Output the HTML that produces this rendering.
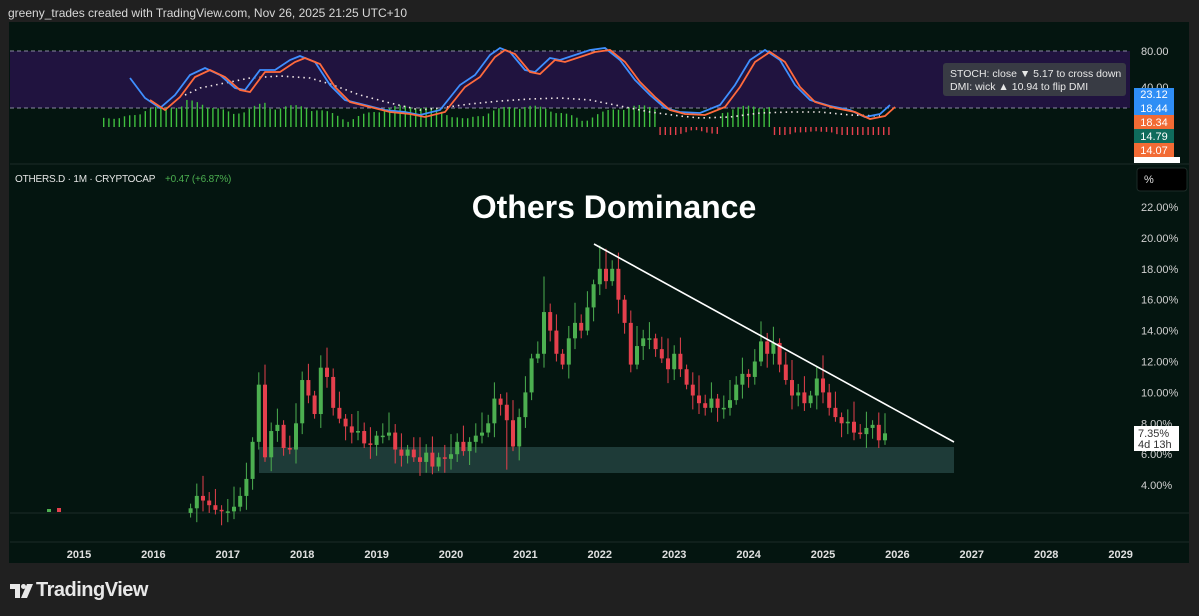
<!DOCTYPE html>
<html><head><meta charset="utf-8">
<style>
html,body{margin:0;padding:0;background:#202020;width:1199px;height:616px;overflow:hidden;font-family:"Liberation Sans",sans-serif}
.hdr{position:absolute;left:8px;top:6px;font-size:12px;color:#d8d8d8}
.panel{position:absolute;left:9px;top:22px;width:1180px;height:541px;background:#041510}
svg{position:absolute;left:0;top:0}
.logo{position:absolute;left:10px;top:579px;color:#e8e8e8;font-size:20px;font-weight:bold;letter-spacing:-0.5px}
</style></head><body>
<div class="hdr">greeny_trades created with TradingView.com, Nov 26, 2025 21:25 UTC+10</div>
<div class="panel"></div>
<svg id="s" width="1199" height="616" xmlns="http://www.w3.org/2000/svg" font-family="Liberation Sans, sans-serif">
<rect x="1130" y="22" width="59" height="541" fill="#041510"/>
<rect x="10" y="51" width="1120" height="57" fill="#20133f"/>
<line x1="10" y1="51" x2="1130" y2="51" stroke="#8a8aa0" stroke-dasharray="4,3"/>
<line x1="10" y1="108" x2="1130" y2="108" stroke="#8a8aa0" stroke-dasharray="4,3"/>
<line x1="10" y1="164" x2="1189" y2="164" stroke="#1c2b27"/>
<line x1="10" y1="513" x2="1189" y2="513" stroke="#1c2b27"/>
<line x1="10" y1="542" x2="1189" y2="542" stroke="#1c2b27"/>
<g id="hist"></g>
<polyline id="dots" fill="none" stroke="#f0e6e6" stroke-width="1.6" stroke-dasharray="1.5,4"/>
<polyline id="blue" fill="none" stroke="#3f8fff" stroke-width="1.8"/>
<polyline id="orng" fill="none" stroke="#ff6a3d" stroke-width="1.8"/>
<text x="1141" y="55" fill="#d8d8d8" font-size="11">80.00</text>
<rect x="943" y="63" width="183" height="33" rx="3" fill="#3a3d44" opacity="0.95"/>
<text x="950" y="77" fill="#e8e8e8" font-size="10.5">STOCH: close ▼ 5.17 to cross down</text>
<text x="950" y="90" fill="#e8e8e8" font-size="10.5">DMI: wick ▲ 10.94 to flip DMI</text>
<text x="1141" y="91" fill="#d8d8d8" font-size="11">40.00</text>
<rect x="1134" y="88" width="40" height="13" fill="#2f8ef5"/><text x="1154" y="98" fill="#fff" font-size="11" text-anchor="middle">23.12</text>
<rect x="1134" y="101" width="40" height="14" fill="#2f8ef5"/><text x="1154" y="112" fill="#fff" font-size="11" text-anchor="middle">18.44</text>
<rect x="1134" y="115" width="40" height="14" fill="#f26b34"/><text x="1154" y="126" fill="#fff" font-size="11" text-anchor="middle">18.34</text>
<rect x="1134" y="129" width="40" height="14" fill="#0f6b5c"/><text x="1154" y="140" fill="#fff" font-size="11" text-anchor="middle">14.79</text>
<rect x="1134" y="143" width="40" height="14" fill="#f26b34"/><text x="1154" y="154" fill="#fff" font-size="11" text-anchor="middle">14.07</text>
<rect x="1134" y="157" width="46" height="6" fill="#fff"/>
<rect x="1137" y="168" width="50" height="23" rx="3" fill="#000" stroke="#1c2b27"/>
<text x="1144" y="183" fill="#e0e0e0" font-size="11">%</text>
<text x="15" y="182" fill="#e6e6e6" font-size="10" letter-spacing="-0.2">OTHERS.D · 1M · CRYPTOCAP</text>
<text x="165" y="182" fill="#4caf50" font-size="10" letter-spacing="-0.2">+0.47 (+6.87%)</text>
<text x="614" y="218" fill="#ffffff" font-size="32" font-weight="bold" text-anchor="middle">Others Dominance</text>
<g id="yax" fill="#d0d0d0" font-size="11"></g>
<rect x="259" y="447" width="695" height="26" fill="#23423f" opacity="0.85"/>
<g id="c"></g>
<line x1="594" y1="244" x2="954" y2="442" stroke="#fff" stroke-width="1.6"/>
<rect x="1134" y="426" width="45" height="25" fill="#fff"/>
<text x="1138" y="437" fill="#333" font-size="11">7.35%</text>
<text x="1138" y="448" fill="#333" font-size="11">4d 13h</text>
<g id="xax" fill="#e0e0e0" font-size="11" font-weight="bold" text-anchor="middle"></g>
<g fill="#e8e8e8">
<path d="M10 584 H20 V598 H15 V589 H10 Z"/>
<circle cx="23.5" cy="586.5" r="2.5"/>
<path d="M27 584 H33 L27 598 H21 Z"/>
</g>
</svg>
<div class="logo" style="left:36px">TradingView</div>
<script>
var NS="http://www.w3.org/2000/svg";
function el(p,t,a,txt){var e=document.createElementNS(NS,t);for(var k in a)e.setAttribute(k,a[k]);if(txt)e.textContent=txt;document.getElementById(p).appendChild(e);}
function Y(p){return 207+(22-p)*15.45;}
for(var p=22;p>=4;p-=2){el("yax","text",{x:1141,y:Y(p)+4},p.toFixed(2)+"%");}
for(var y=2015;y<=2029;y++){el("xax","text",{x:79+(y-2015)*74.4,y:558},""+y);}
var closes=[2.5,3.3,3.0,2.7,2.4,2.3,
2.3,2.6,3.3,4.4,6.8,10.5,5.8,7.5,7.9,6.4,6.3,8.0,
10.8,9.8,8.6,11.6,11.0,9.0,8.3,7.8,7.4,7.5,6.7,6.6,
7.2,7.2,7.4,6.3,5.9,6.3,5.8,5.5,6.1,5.2,5.8,5.7,
6.0,6.8,6.2,6.8,7.2,7.4,8.0,9.6,9.2,8.2,6.5,8.4,
10.0,12.2,12.5,15.2,14.0,12.5,11.8,13.5,14.5,14.0,15.5,17.0,
18.0,17.2,18.0,16.0,14.5,11.8,13.0,13.5,13.5,12.8,12.2,11.5,
12.5,11.5,10.5,9.8,9.3,9.0,9.6,9.0,9.0,9.5,10.5,11.2,
11.0,12.0,13.3,12.5,13.2,11.8,10.8,9.8,10.0,9.3,9.8,10.9,
10.0,9.0,8.4,8.0,8.1,7.4,7.3,7.7,7.9,6.9,7.35];
var prev=2.2;
for(var i=0;i<closes.length;i++){
 var m=i+6;var x=79+(2016-2015)*74.4+m*6.2;
 var o=prev,c=closes[i];var up=c>=o;
 var hi=Math.max(o,c)+0.3+ (i*7%5)*0.25, lo=Math.min(o,c)-0.3-(i*3%4)*0.2;
 if(i==66)hi=19.5; if(i==51)lo=5.0; if(i==57)hi=17.5; if(i==117)lo=4.9; if(i==102)hi=12.4;
 var col=up?"#4caf50":"#e5404d";
 el("c","line",{x1:x,x2:x,y1:Y(hi),y2:Y(lo),stroke:col,"stroke-width":1});
 var t=Y(Math.max(o,c)),b=Y(Math.min(o,c));if(b-t<1.5)b=t+1.5;
 el("c","rect",{x:x-2,y:t,width:4,height:b-t,fill:col});
 prev=c;
}
el("c","rect",{x:47,y:509,width:4,height:3,fill:"#4caf50"});el("c","rect",{x:57,y:508,width:4,height:4,fill:"#e5404d"});
var bp=[[130,78],[145,98],[160,108],[175,95],[190,75],[205,68],[220,75],[235,88],[245,90],[260,70],[275,70],[290,60],[300,56],[315,62],[330,85],[345,100],[365,105],[385,110],[405,112],[420,115],[440,110],[460,85],[475,75],[490,55],[500,48],[510,52],[525,70],[535,72],[550,58],[560,60],[575,55],[590,50],[605,48],[620,60],[635,80],[650,95],[665,108],[680,112],[700,113],[720,105],[735,85],[750,60],[765,50],[780,60],[795,85],[810,100],[830,106],[850,110],[865,117],[880,114],[890,105]];
document.getElementById("blue").setAttribute("points",bp.map(function(p){return p[0]+","+p[1]}).join(" "));
document.getElementById("orng").setAttribute("points",bp.slice(1).map(function(p){return (p[0]+5)+","+(p[1]+2)}).join(" "));
document.getElementById("dots").setAttribute("points","185,95 200,88 220,84 250,78 280,76 310,78 330,84 360,95 390,103 420,110 440,108 470,104 500,101 530,99 560,98 590,100 620,106 650,112 680,116 700,118 730,117 760,113 790,112 820,112 850,115 880,116");
for(var x=103;x<890;x+=5.2){
 var h=4+ Math.abs(Math.sin(x/37))*14 + Math.abs(Math.sin(x/11))*4;
 if(x>185&&x<265)h+=6;
 var red=(x>655&&x<720)||(x>770&&x<890);
 if(red){el("hist","rect",{x:x,y:127,width:1.4,height:Math.min(h/2,8),fill:"#e5404d"});}
 else el("hist","rect",{x:x,y:127-h,width:1.4,height:h,fill:"#3fbf3f"});
}
</script>
</body></html>
